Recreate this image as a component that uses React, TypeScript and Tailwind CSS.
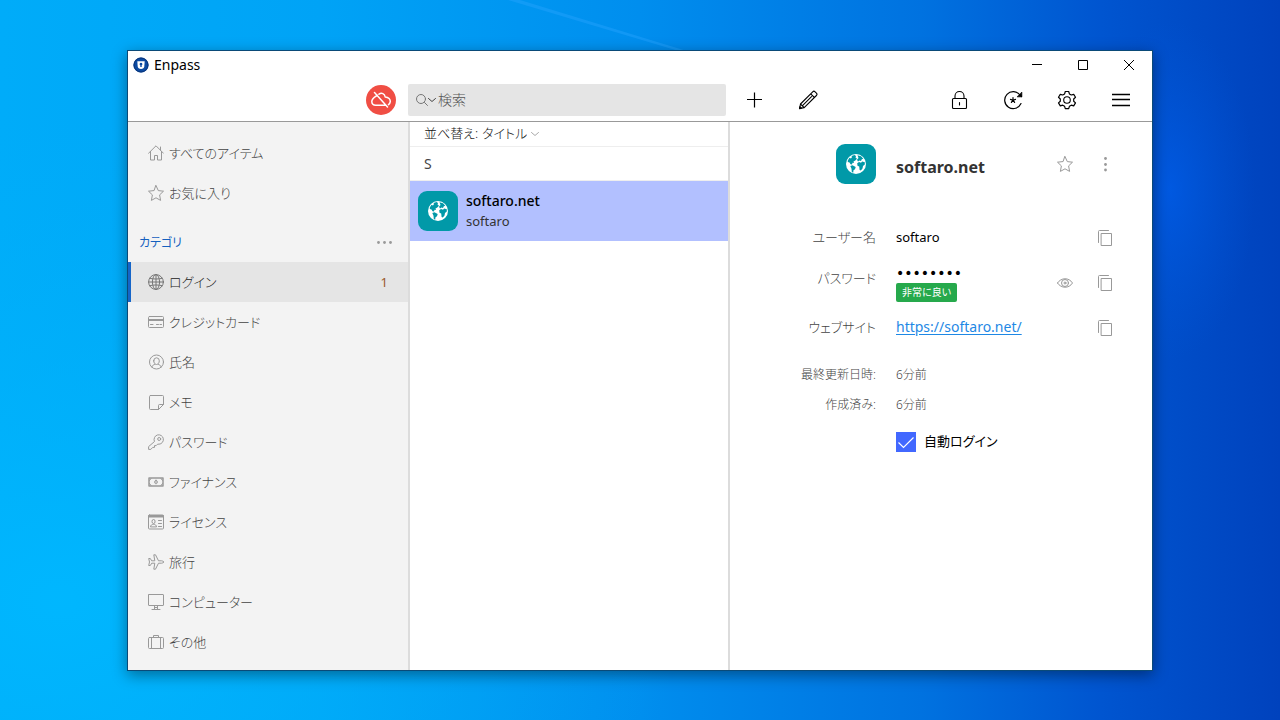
import { useState, type ReactNode } from "react";

type IconProps = { className?: string; children: ReactNode; size?: number };

function Line({ className = "size-4", children, size = 16 }: IconProps) {
  return (
    <svg
      viewBox={`0 0 ${size} ${size}`}
      className={`shrink-0 ${className}`}
      fill="none"
      stroke="currentColor"
      strokeLinejoin="round"
      strokeLinecap="round"
      aria-hidden="true"
    >
      {children}
    </svg>
  );
}

const StarIcon = () => (
  <Line>
    <path d="M8 .6l2.300 5 5.200.6-3.900 3.700 1 5.500L8 12.800l-4.600 2.600 1-5.500L.5 6.200l5.200-.6z" />
  </Line>
);

const HomeIcon = () => (
  <Line>
    <path d="M.6 8.200L8 .8l7.400 7.400M2.500 6.500v8.500h4v-4.500h3V15h4V6.500M12.500 2v3" />
  </Line>
);

const GlobeLineIcon = () => (
  <Line>
    <circle cx="8" cy="8" r="7.400" />
    <ellipse cx="8" cy="8" rx="3.600" ry="7.400" />
    <path d="M8 .6v14.800M.6 8h14.800M1.800 4.300c3.500 1 8.900 1 12.400 0M1.800 11.700c3.500-1 8.900-1 12.400 0" />
  </Line>
);

const CardIcon = () => (
  <Line>
    <rect x=".5" y="2.500" width="15" height="11" rx="1" />
    <path d="M1 6h14" strokeWidth="2" />
    <path d="M2.500 10.500h2.500M8.500 10.500h2M12 10.500h1.500" />
  </Line>
);

const PersonIcon = () => (
  <Line>
    <circle cx="8.500" cy="8" r="7" />
    <path d="M5.700 6.800a2.800 3 0 015.600 0c0 2-1.200 3.700-2.800 3.700S5.700 8.800 5.700 6.800zM3.700 13c.5-1.800 2-2 3.300-2.800M13.300 13c-.5-1.800-2-2-3.300-2.800" />
  </Line>
);

const NoteIcon = () => (
  <Line>
    <path d="M2.500 1.500h12a1 1 0 011 1v8l-5 5h-8a1 1 0 01-1-1v-12a1 1 0 011-1zM15.500 10.500h-4a1 1 0 00-1 1v4" />
  </Line>
);

const KeyIcon = () => (
  <Line>
    <path d="M6.300 7.200A4.700 4.700 0 1111 10.200l-1.300-.1-1.500 1.500H6.500v1.800H4.700L2.800 15.400H.6v-2.400z" />
    <circle cx="11.200" cy="5" r="1.500" />
  </Line>
);

const MoneyIcon = () => (
  <Line>
    <rect x="1" y="4" width="14" height="8" strokeWidth="1.500" />
    <path d="M1.500 6.500l1.500-2M14.500 6.500L13 4.500M1.500 9.500l1.500 2M14.500 9.500L13 11.500" />
    <path d="M8 6.300c-2 0-2 3.400 0 3.400s2-3.400 0-3.400zM8 7.300v1.400" />
  </Line>
);

const LicenseIcon = () => (
  <Line>
    <rect x=".5" y="1" width="15" height="14" rx="1" />
    <path d="M1 2.300h14" strokeWidth="2.500" />
    <path d="M4 7a1.500 1.500 0 013 0v1a1.500 1.500 0 01-3 0zM2.500 12.500c0-3 6-3 6 0zM10.500 6.500h3M10.500 9.500h3M10.500 12.500h3" />
  </Line>
);

const PlaneIcon = () => (
  <Line>
    <path d="M15.500 8c0-.8-1-1.200-2-1.200h-3L7.500.8H5.800l1 6H3.700L2.300 4.500H.7l.8 3.500-.8 3.500h1.600l1.400-2.300h3.100l-1 6h1.700l3-6h3c1 0 2-.4 2-1.200z" />
  </Line>
);

const MonitorIcon = () => (
  <Line>
    <rect x=".5" y=".5" width="15" height="11" rx=".5" />
    <path d="M6.500 12v3M9.500 12v3M4 15.500h8M6.500 13.500h3" />
  </Line>
);

const CaseIcon = () => (
  <Line>
    <rect x=".5" y="3.500" width="15" height="11" rx="1" />
    <path d="M3.500 3.500v11M12.500 3.500v11M5.500 3.500v-2h5v2" />
  </Line>
);

const CopyIcon = () => (
  <Line>
    <path d="M1.500 12.500v-11a1 1 0 011-1h9" />
    <rect x="4.500" y="3.500" width="10" height="12" />
  </Line>
);

function Earth() {
  return (
    <span className="flex size-10 shrink-0 items-center justify-center rounded-[9px] bg-[#0199a8]">
      <svg viewBox="0 0 20 20" className="size-5" aria-hidden="true">
        <circle cx="10" cy="10" r="10" fill="#fff" />
        <g fill="#0199a8">
          <path d="M1.800 6.500L3.500 3.800 5 4.500 6 3 5.500 2l3-1 1.500 1-.5 1.500L11 4.800 9.300 6.500 7.500 7.500 8 9 6.500 8.800 6 10.500l-1.500-.3L3.500 8.500 1.800 8z" />
          <path d="M4.300 12l2.200-.8 3.200 1.700-.7 2.300-1.500 1-.3 2.600-1.400-.8-.3-3.200z" />
          <path d="M11.500 1.200l3.500 1 2.300 2.500-1.500.5-.8 1.800-1.500-.5-1.500 1-1-1.700L12.500 4z" />
          <path d="M11.200 9.300L13 8l2 .8 1.200-1.300 2.600.8v2.200l-1.800 1.500-.5 2.500-1.700 2-1.200-.5-.4-3.500-1.700-.8z" />
        </g>
      </svg>
    </span>
  );
}

const categories = [
  { name: "ログイン", icon: <GlobeLineIcon />, count: 1 },
  { name: "クレジットカード", icon: <CardIcon /> },
  { name: "氏名", icon: <PersonIcon /> },
  { name: "メモ", icon: <NoteIcon /> },
  { name: "パスワード", icon: <KeyIcon /> },
  { name: "ファイナンス", icon: <MoneyIcon /> },
  { name: "ライセンス", icon: <LicenseIcon /> },
  { name: "旅行", icon: <PlaneIcon /> },
  { name: "コンピューター", icon: <MonitorIcon /> },
  { name: "その他", icon: <CaseIcon /> },
];

type NavItemProps = {
  name: string;
  icon: ReactNode;
  count?: number;
  active?: boolean;
  onSelect: () => void;
};

function NavItem({ name, icon, count, active = false, onSelect }: NavItemProps) {
  return (
    <button
      type="button"
      onClick={onSelect}
      aria-current={active}
      className={`flex h-10 w-full items-center gap-[5px] border-l-3 pr-5 pl-[17px] text-left text-[13px] ${
        active ? "border-[#1565c8] bg-[#e5e5e5] text-[#222]" : "border-transparent text-[#444]"
      }`}
    >
      <span className={active ? "text-[#777]" : "text-[#999]"}>{icon}</span>
      <span className="grow pt-px font-light">{name}</span>
      {count !== undefined && <span className="pt-px text-[#9a5a2c]">{count}</span>}
    </button>
  );
}

function TitleBar() {
  return (
    <div className="flex h-7 items-center gap-[5px] pl-[5px] text-black">
      <svg viewBox="0 0 16 16" className="size-4" aria-hidden="true">
        <circle cx="8" cy="8" r="7.600" fill="#0b4aa2" />
        <circle cx="8" cy="8" r="7" fill="none" stroke="#0a3478" />
        <path d="M4.300 4.300h7.400l-.4 5c-.2 1.700-1.300 2.700-3.300 2.700s-3.100-1-3.300-2.700z" fill="#fff" />
        <path d="M8 5.700a1.400 1.400 0 01.7 2.600V10H7.300V8.300A1.400 1.400 0 018 5.700z" fill="#0b4aa2" />
      </svg>
      <h1 className="grow text-sm">Enpass</h1>
      <button type="button" aria-label="最小化" className="flex w-[46px] justify-center">
        <svg viewBox="0 0 10 10" className="size-[10px]" stroke="currentColor">
          <path d="M0 4.500h10" />
        </svg>
      </button>
      <button type="button" aria-label="最大化" className="-ml-[5px] flex w-[46px] justify-center">
        <svg viewBox="0 0 10 10" className="size-[10px]" stroke="currentColor" fill="none">
          <path d="M.5.5h9v9h-9z" />
        </svg>
      </button>
      <button type="button" aria-label="閉じる" className="-ml-[5px] flex w-[46px] justify-center">
        <svg viewBox="0 0 10 10" className="size-[10px]" stroke="currentColor">
          <path d="M0 0l10 10M10 0L0 10" />
        </svg>
      </button>
    </div>
  );
}

function ToolButton({ label, children }: { label: string; children: ReactNode }) {
  return (
    <button type="button" aria-label={label} className="flex w-[54px] justify-center text-black">
      <Line className="size-5" size={20}>
        {children}
      </Line>
    </button>
  );
}

function Toolbar() {
  return (
    <div className="flex h-[43px] items-center border-b border-[#999]">
      <div className="flex w-[280px] justify-end pr-3">
        <button
          type="button"
          aria-label="同期オフ"
          className="flex size-[30px] items-center justify-center rounded-full bg-[#f04e44] text-white"
        >
          <Line className="size-5" size={20}>
            <g strokeWidth="1.500">
              <path d="M6.300 5.300C2.500 8 .8 8.800.8 11.500c0 2.600 1.700 3.700 4 3.700h9.400M8 4.200c2.500-1.800 5.700-.5 6.200 2.800 3.300.2 5.400 2.300 5 4.900-.2 1.300-.8 2.200-1.700 2.800M3.500 2.500l13 14.500" />
            </g>
          </Line>
        </button>
      </div>
      <label className="flex h-8 w-[318px] items-center rounded-xs bg-[#e5e5e5] pl-2 text-[#777]">
        <Line className="size-3" size={12}>
          <circle cx="5" cy="5" r="4.500" />
          <path d="M8.500 8.500l3 3" />
        </Line>
        <Line className="size-2" size={8}>
          <path d="M.5 2.500L4 5.500l3.500-3" stroke="#444" />
        </Line>
        <input
          type="search"
          aria-label="検索"
          placeholder="検索"
          className="ml-[2px] w-full bg-transparent text-sm font-light outline-none placeholder:text-[#555]"
        />
      </label>
      <div className="flex grow items-center justify-between pr-1 pl-px">
        <div className="flex">
          <ToolButton label="追加">
            <path d="M10.500 2.500v15M3 9.500h15" strokeWidth="1.200" strokeLinecap="butt" />
          </ToolButton>
          <ToolButton label="編集">
            <path d="M1.500 18.500l1-4.500L14.700 1.800a1.700 1.700 0 012.400 0l1.300 1.300a1.700 1.700 0 010 2.400L6.200 17.600zM2.500 14l3.700 3.600M12.700 3.800l3.700 3.700M13.500 6.700L5 15.200" strokeWidth="1.100" />
            <path d="M1.500 18.500l.5-2 1.500 1.500z" fill="currentColor" />
          </ToolButton>
        </div>
        <div className="flex">
          <ToolButton label="ロック">
            <rect x="3.500" y="8.500" width="14" height="10" rx="1" strokeWidth="1.100" />
            <path d="M6 8.500V6a4.500 4.500 0 019 0v2.500M10.500 12.500V15" strokeWidth="1.100" />
          </ToolButton>
          <ToolButton label="パスワード生成">
            <path d="M18 13.500A8.500 8.500 0 1117 5l1.500 1.500" strokeWidth="1.200" />
            <path d="M18.800 2.500v4.300h-4.300z" fill="currentColor" strokeWidth=".8" />
            <path d="M10 10.200V7.500M10 10.200l-2.500-.8M10 10.200l2.500-.8M10 10.200l-1.600 2.200M10 10.200l1.600 2.200" strokeWidth="1.200" />
          </ToolButton>
          <ToolButton label="設定">
            <path d="M8.300 1.500h3.400l.7 2.400 1.900 1.100 2.400-.7 1.800 3-1.800 1.700v2.200l1.800 1.700-1.800 3-2.400-.7-1.900 1.100-.7 2.300H8.300l-.7-2.300-1.900-1.100-2.400.7-1.800-3 1.800-1.700V9L1.500 7.300l1.800-3 2.400.7 1.900-1.100z" strokeWidth="1.200" />
            <circle cx="10" cy="10" r="3.300" strokeWidth="1.100" />
          </ToolButton>
          <ToolButton label="メニュー">
            <path d="M1 4.500h18M1 9.500h18M1 15.500h18" strokeWidth="1.500" strokeLinecap="butt" />
          </ToolButton>
        </div>
      </div>
    </div>
  );
}

type FieldProps = { label: string; raised?: boolean; children: ReactNode; actions: ReactNode };

function Field({ label, raised = false, children, actions }: FieldProps) {
  return (
    <div className="grid h-[45px] grid-cols-[146px_1fr_auto] items-center gap-5 text-[13px]">
      <dt className={`text-right font-light text-[#444] ${raised ? "pb-2" : ""}`}>{label}</dt>
      <dd>{children}</dd>
      <dd className="flex text-[#999]">{actions}</dd>
    </div>
  );
}

function IconButton({ label, children }: { label: string; children: ReactNode }) {
  return (
    <button type="button" aria-label={label} className="flex size-10 items-center justify-center text-[#999]">
      {children}
    </button>
  );
}

function Detail() {
  return (
    <section className="grow pt-[22px] pr-[27px]">
      <header className="grid h-10 grid-cols-[146px_1fr_auto] items-center gap-5">
        <div className="flex justify-end">
          <Earth />
        </div>
        <h2 className="pt-[6px] text-base font-bold text-[#333]">softaro.net</h2>
        <div className="flex">
          <IconButton label="お気に入りに追加">
            <StarIcon />
          </IconButton>
          <IconButton label="その他の操作">
            <svg viewBox="0 0 16 16" className="size-4" fill="currentColor">
              <circle cx="8.500" cy="2.500" r="1.400" />
              <circle cx="8.500" cy="8.500" r="1.400" />
              <circle cx="8.500" cy="14" r="1.400" />
            </svg>
          </IconButton>
        </div>
      </header>

      <dl className="mt-[31px]">
        <Field label="ユーザー名" actions={<IconButton label="ユーザー名をコピー"><CopyIcon /></IconButton>}>
          <span className="text-black">softaro</span>
        </Field>
        <Field
          label="パスワード"
          raised
          actions={
            <>
              <IconButton label="パスワードを表示">
                <Line>
                  <path d="M.5 8C4 2.300 12 2.300 15.500 8 12 13.700 4 13.700.5 8z" />
                  <circle cx="8" cy="8" r="3.500" />
                  <circle cx="8" cy="8" r="1" />
                </Line>
              </IconButton>
              <IconButton label="パスワードをコピー"><CopyIcon /></IconButton>
            </>
          }
        >
          <div className="font-['DejaVu_Sans',sans-serif] text-sm leading-5 text-black">••••••••</div>
          <div className="flex">
            <span className="rounded-xs bg-[#26a94c] px-[6px] text-[10px] leading-[19px] text-white">非常に良い</span>
          </div>
        </Field>
        <Field label="ウェブサイト" actions={<IconButton label="URLをコピー"><CopyIcon /></IconButton>}>
          <a href="https://softaro.net/" className="text-sm text-[#1e88e5] underline underline-offset-2">
            https://softaro.net/
          </a>
        </Field>
      </dl>

      <dl className="mt-[10px] grid grid-cols-[146px_1fr] gap-x-5 text-xs leading-[30px] font-light text-[#444]">
        <dt className="text-right">最終更新日時:</dt>
        <dd>6分前</dd>
        <dt className="text-right">作成済み:</dt>
        <dd>6分前</dd>
      </dl>

      <div className="mt-3 flex pl-[166px]">
        <label className="flex items-center gap-2 text-[13px] text-black">
          <span className="grid size-5">
            <input type="checkbox" defaultChecked className="peer col-start-1 row-start-1 size-5 appearance-none border border-[#4268ff] checked:bg-[#4268ff]" />
            <svg viewBox="0 0 20 20" className="pointer-events-none invisible col-start-1 row-start-1 size-5 peer-checked:visible" fill="none" stroke="#fff">
              <path d="M2.500 10.500l5 5 10-10" strokeWidth="1.200" />
            </svg>
          </span>
          自動ログイン
        </label>
      </div>
    </section>
  );
}

export default function App() {
  const [selected, setSelected] = useState("ログイン");

  return (
    <div className="relative flex min-h-screen bg-[linear-gradient(90deg,#00acf9_0%,#00a3f6_25%,#008eee_50%,#0072e0_72%,#0055d0_86%,#0042bd_100%)] px-32 pt-[51px] pb-[50px] font-['Noto_Sans','Noto_Sans_CJK_JP',sans-serif] [font-feature-settings:'palt']">
      <svg viewBox="0 0 1280 720" preserveAspectRatio="none" className="absolute inset-0 size-full" aria-hidden="true">
        <defs>
          <radialGradient id="glow">
            <stop offset="0" stopColor="#0060f0" stopOpacity=".6" />
            <stop offset=".5" stopColor="#005ce6" stopOpacity=".3" />
            <stop offset="1" stopColor="#0058dc" stopOpacity="0" />
          </radialGradient>
          <radialGradient id="cyan">
            <stop offset="0" stopColor="#00b8ff" stopOpacity=".9" />
            <stop offset="1" stopColor="#00b0f8" stopOpacity="0" />
          </radialGradient>
        </defs>
        <ellipse cx="60" cy="600" rx="620" ry="480" fill="url(#cyan)" />
        <ellipse cx="1170" cy="190" rx="85" ry="170" fill="url(#glow)" />
        <path d="M508 0h12l170 52h-8z" fill="#2aa4ff" opacity=".4" />
      </svg>

      <main className="relative flex grow flex-col bg-white shadow-[0_0_0_1px_#0a4a78,0_4px_14px_1px_rgba(0,0,0,0.4)]">
        <TitleBar />
        <Toolbar />
        <div className="flex grow">
          <nav className="w-[282px] shrink-0 border-r-2 border-[#dcdcdc] bg-[#f3f3f3] pt-[11px] pb-2">
            <NavItem name="すべてのアイテム" icon={<HomeIcon />} active={selected === "すべてのアイテム"} onSelect={() => setSelected("すべてのアイテム")} />
            <NavItem name="お気に入り" icon={<StarIcon />} active={selected === "お気に入り"} onSelect={() => setSelected("お気に入り")} />
            <div className="mt-[9px] flex h-10 items-center justify-between pr-4 pl-[11px]">
              <h2 className="pt-px text-xs text-[#1560bf]">カテゴリ</h2>
              <button type="button" aria-label="カテゴリの編集" className="text-[#999]">
                <svg viewBox="0 0 16 16" className="size-4" fill="currentColor">
                  <circle cx="2.500" cy="8.500" r="1.400" />
                  <circle cx="8.500" cy="8.500" r="1.400" />
                  <circle cx="14.500" cy="8.500" r="1.400" />
                </svg>
              </button>
            </div>
            {categories.map((c) => (
              <NavItem key={c.name} {...c} active={selected === c.name} onSelect={() => setSelected(c.name)} />
            ))}
          </nav>

          <section className="w-[320px] shrink-0 border-r-2 border-[#dcdcdc]">
            <div className="flex h-[25px] items-center border-b border-[#eee] pl-[14px] text-[13px] font-light text-[#111]">
              <label htmlFor="sort">並べ替え:</label>
              <select id="sort" className="ml-1 field-sizing-content appearance-none">
                <option>タイトル</option>
              </select>
              <Line className="ml-1 size-2 text-[#aaa]" size={8}>
                <path d="M.5 2.500L4 5.500l3.500-3" />
              </Line>
            </div>
            <h3 className="h-[34px] border-b border-[#eee] pl-[14px] text-sm leading-[34px] text-[#444]">S</h3>
            <button type="button" className="flex h-[60px] w-full items-center gap-2 bg-[#b2c0ff] pl-2 text-left">
              <Earth />
              <span className="flex flex-col text-sm leading-5">
                <span className="font-medium text-black">softaro.net</span>
                <span className="text-[13px] text-[#333]">softaro</span>
              </span>
            </button>
          </section>

          <Detail />
        </div>
      </main>
    </div>
  );
}
